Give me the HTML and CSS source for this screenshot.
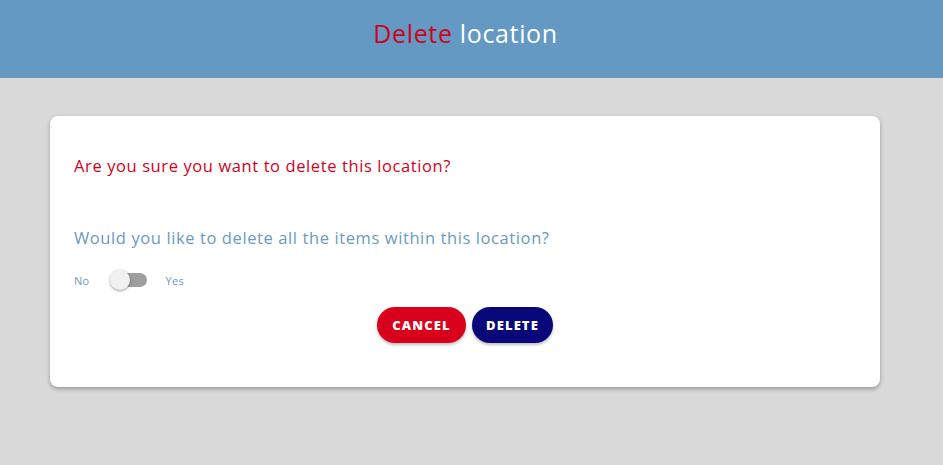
FILE: index.html
```html
<!DOCTYPE html>
<html>
<head>
<meta charset="utf-8">
<link rel="stylesheet" href="styles.css">
</head>
<body>
<header class="topbar">
  <h1 class="title"><span class="title-red">Delete</span> location</h1>
</header>
<main class="page">
  <section class="card">
    <p class="question">Are you sure you want to delete this location?</p>
    <p class="subquestion">Would you like to delete all the items within this location?</p>
    <div class="toggle-row">
      <span class="toggle-label">No</span>
      <span class="switch"><span class="track"></span><span class="thumb"></span></span>
      <span class="toggle-label">Yes</span>
    </div>
    <div class="actions">
      <button class="btn btn-cancel">CANCEL</button>
      <button class="btn btn-delete">DELETE</button>
    </div>
  </section>
</main>
</body>
</html>
```
FILE: styles.css
```css
* { box-sizing: border-box; }
html, body { margin: 0; padding: 0; }
body {
  background: #d9d9d9;
  font-family: "Open Sans", "Noto Sans", sans-serif;
  width: 943px;
  height: 465px;
  overflow: hidden;
}
.topbar {
  height: 78px;
  background: #6399c3;
  display: flex;
  align-items: center;
  justify-content: center;
}
.title {
  margin: 0 0 12px 0;
  font-size: 25px;
  font-weight: 400;
  color: #ffffff;
  letter-spacing: 0.65px;
  padding-right: 12px;
}
.title-red { color: #d0021b; }
.page {
  padding: 38px 63px 0 50px;
}
.card {
  background: #fff;
  border-radius: 8px;
  box-shadow: 0 2px 4px rgba(0,0,0,0.3);
  padding: 38px 24px 0 24px;
  height: 271px;
}
.question {
  margin: 0;
  font-size: 16.5px;
  line-height: 24px;
  font-weight: 500;
  letter-spacing: 0.6px;
  color: #d0021b;
}
.subquestion {
  margin: 48px 0 0 0;
  font-size: 16.5px;
  line-height: 24px;
  font-weight: 500;
  letter-spacing: 0.6px;
  color: #6a9ac4;
}
.toggle-row {
  margin-top: 18px;
  display: flex;
  align-items: center;
  height: 24px;
}
.toggle-label {
  font-size: 11px;
  letter-spacing: 0.3px;
  color: #6a9ac4;
}
.switch {
  position: relative;
  width: 37px;
  height: 24px;
  margin: 0 19px 0 20px;
  display: inline-block;
}
.track {
  position: absolute;
  left: 3px;
  top: 5px;
  width: 34px;
  height: 14px;
  border-radius: 7px;
  background: #9e9e9e;
}
.thumb {
  position: absolute;
  left: 0;
  top: 2px;
  width: 20px;
  height: 20px;
  border-radius: 50%;
  background: #f1f1f1;
  box-shadow: 0 1px 3px rgba(0,0,0,0.4);
}
.actions {
  margin-top: 15px;
  display: flex;
  justify-content: center;
  gap: 6px;
}
.btn {
  border: none;
  height: 36px;
  border-radius: 18px;
  color: #fff;
  font-family: "Open Sans", sans-serif;
  font-weight: 800;
  font-size: 13px;
  letter-spacing: 1.1px;
  padding: 0;
  box-shadow: 0 2px 3px rgba(0,0,0,0.25);
}
.btn-cancel { background: #d9001b; width: 89px; }
.btn-delete { background: #09087a; width: 81px; }
```
